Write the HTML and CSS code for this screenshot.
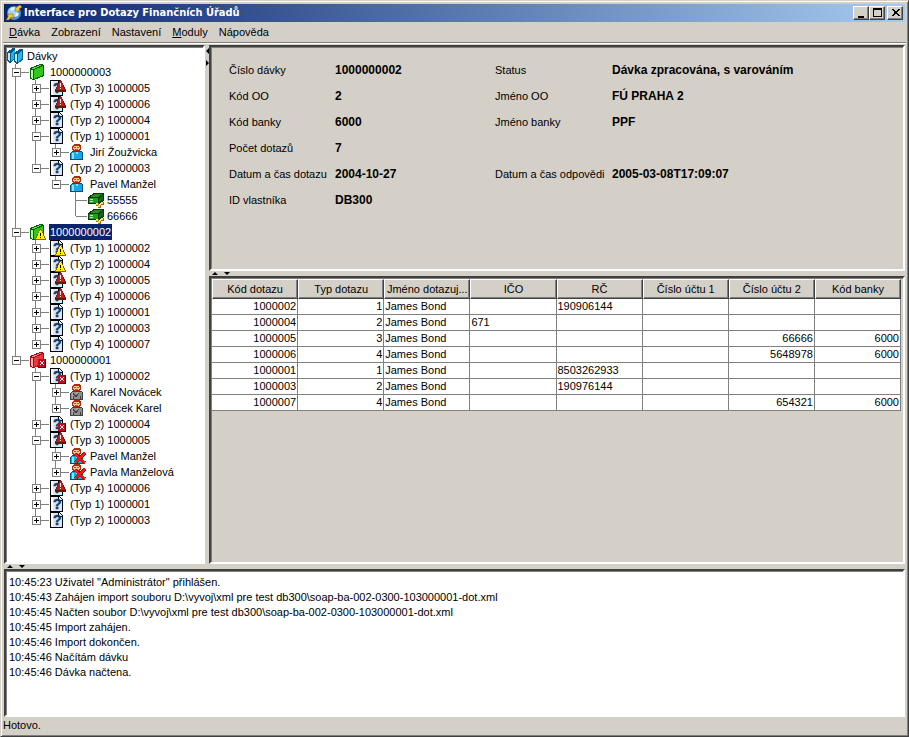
FILE: index.html
```
<!DOCTYPE html>
<html lang="cs">
  <head>
    <meta charset="UTF-8" />
    <meta name="viewport" content="width=device-width, initial-scale=1.0" />
    <title>Interface pro Dotazy Finančních Úřadů</title>
    <link rel="stylesheet" href="styles.css">
  </head>
  <body>
    <!-- icons -->
    <svg class="defs" width="0" height="0">
      <symbol id="book-shape" viewBox="0 0 16 16">
        <path class="ink" d="M0 4L10 0H12L14 1V12L4 16L0 15Z" />
        <path class="cover" d="M4 6L13 2V11L4 15Z" />
        <path class="spine" d="M1 6H3V15L1 14Z" />
        <path class="edge" d="M1 5L10 1H12L4 5Z" />
      </symbol>
      <symbol id="books" viewBox="0 0 18 16">
        <path fill="#085888" d="M0 4L6 0H8V11L3 15L0 13Z" />
        <path fill="#b8ecff" d="M1 5H3V13L1 12Z" />
        <path fill="#1fb4ee" d="M4 5L8 2V10L4 13Z" />
        <path fill="#085888" d="M7 5L13 1H16V12L10 16L7 14Z" />
        <path fill="#b8ecff" d="M8 6H10V14L8 13Z" />
        <path fill="#22b8f2" d="M11 6L15 3V11L11 14Z" />
      </symbol>
      <symbol id="doc" viewBox="0 0 16 16">
        <path fill="#000" d="M0 0H9L13 4V16H0Z" />
        <path fill="#dce6f4" d="M1 1H8V5H12V15H1Z" />
        <path fill="#fff" d="M9 1L12 4H9ZM1 1H3V15H1Z" />
      </symbol>
      <symbol id="error" viewBox="0 0 16 16">
        <path fill="#7c0c08" d="M10 0H11L16 10V12H5V10Z" />
        <path fill="#c81810" d="M10 1H11L15 10H6Z" />
        <path fill="#fff" d="M10 3H11V7H10ZM10 8H11V9H10Z" />
      </symbol>
      <symbol id="warning" viewBox="0 0 16 16">
        <path fill="#a05a00" d="M10 5H11L16 15V16H5V15Z" />
        <path fill="#ffee20" d="M10 6H11L15 15H6Z" />
        <path fill="#000" d="M10 9H11V12H10ZM10 13H11V14H10Z" />
      </symbol>
      <symbol id="cancel" viewBox="0 0 16 16">
        <path fill="#5c0008" d="M8 7H16V16H8Z" />
        <path fill="#b81020" d="M8 7H15V15H8Z" />
        <path stroke="#fff" d="M10 9L14 13M14 9L10 13" />
      </symbol>
      <symbol id="person" viewBox="0 0 16 16">
        <path class="outline" d="M2 7H11L13 9V16H0V9Z" />
        <path class="shirt" d="M2 8H11L12 9V15H1V9Z" />
        <path class="light" d="M2 9H4V15H2ZM6 8H8V10H6Z" />
        <path fill="#a83010" d="M4 0H9L11 2V6L9 7H4L2 6V2Z" />
        <path fill="#f8c890" d="M4 2H9V3H10V5H9V6H4V5H3V3H4Z" />
        <path fill="#c85020" d="M4 3H6V4H4ZM7 3H9V4H7ZM5 5H8V6H5Z" />
      </symbol>
      <symbol id="suit" viewBox="0 0 16 16">
        <path fill="none" stroke="#404040" d="M3 9L6 13L9 9M3 12V15M10 12V15" />
      </symbol>
      <symbol id="cross" viewBox="0 0 16 16">
        <path stroke="#a80808" stroke-width="3" d="M5 6L15 15M15 5L5 15" />
        <path stroke="#f01818" stroke-width="2" d="M5 6L15 15M15 5L5 15" />
      </symbol>
      <symbol id="money" viewBox="0 0 18 16">
        <path fill="#063c08" d="M0 5L6 1H16V9L11 12H0Z" />
        <path fill="#2c8c20" d="M2 5L7 2H15L10 5Z" />
        <path fill="#18a020" d="M1 6H10V11H1Z" />
        <path fill="#b8f0a0" d="M2 7H5V8H2ZM2 9H5V10H2Z" />
        <path fill="#0c6c10" d="M11 6L15 3V8L11 10Z" />
        <path fill="#a86000" d="M8 11H11V14H8ZM13 10H16V13H13ZM10 13H13V16H10Z" />
        <path fill="#ffe050" d="M8 11H10V13H8ZM13 10H15V12H13ZM10 13H12V15H10Z" />
      </symbol>
    </svg>

    <div class="window">
      <header class="titlebar">
        <svg class="logo" viewBox="0 0 16 16">
          <circle cx="8" cy="8" r="7" fill="#4a94d4" />
          <circle cx="7" cy="7" r="5" fill="#a8d4f4" />
          <path fill="#e8f4fc" d="M5 3L9 2L8 5L5 6ZM10 8L13 8L12 11L9 12Z" />
          <path fill="#f8c830" stroke="#8a5c00" stroke-width="0.5" d="M9 4L12 1L14 0L16 2L13 4L14 6H9Z" />
          <path fill="#f8c830" stroke="#8a5c00" stroke-width="0.5" d="M2 9L7 9V14L5 12L3 15L0 15L2 12Z" />
        </svg>
        <h1>Interface pro Dotazy Finančních Úřadů</h1>
        <button class="win-btn" aria-label="Minimalizovat"><svg viewBox="0 0 12 10"><path d="M3 8H9V10H3Z" /></svg></button>
        <button class="win-btn" aria-label="Maximalizovat"><svg viewBox="0 0 12 10"><path fill-rule="evenodd" d="M2 0H11V9H2ZM3 2V8H10V2Z" /></svg></button>
        <button class="win-btn close" aria-label="Zavřít"><svg viewBox="0 0 12 10"><path d="M2 1H4L6 3H7L9 1H11L8 4V5L11 8H9L7 6H6L4 8H2L5 5V4Z" /></svg></button>
      </header>

      <nav class="menu">
        <button><u>D</u>ávka</button>
        <button>Zobrazení</button>
        <button>Nastavení</button>
        <button><u>M</u>oduly</button>
        <button>Nápověda</button>
      </nav>

      <main class="workspace">
        <div class="columns">
          <section class="pane tree">
            <div class="row root">
              <svg class="icon wide"><use href="#books" /></svg>
              <span class="label">Dávky</span>
            </div>
            <ul id="tree"></ul>
          </section>

          <div class="divider vertical">
            <svg viewBox="0 0 5 20"><path d="M4 1V7L1 4ZM1 13V19L4 16Z" /></svg>
          </div>

          <div class="right">
            <section class="pane details">
              <dl>
                <dt>Číslo dávky</dt><dd>1000000002</dd>
                <dt>Kód OO</dt><dd>2</dd>
                <dt>Kód banky</dt><dd>6000</dd>
                <dt>Počet dotazů</dt><dd>7</dd>
                <dt>Datum a čas dotazu</dt><dd>2004-10-27</dd>
                <dt>ID vlastníka</dt><dd>DB300</dd>
              </dl>
              <dl>
                <dt>Status</dt><dd>Dávka zpracována, s varováním</dd>
                <dt>Jméno OO</dt><dd>FÚ PRAHA 2</dd>
                <dt>Jméno banky</dt><dd>PPF</dd>
                <dt></dt><dd></dd>
                <dt>Datum a čas odpovědi</dt><dd>2005-03-08T17:09:07</dd>
              </dl>
            </section>

            <div class="divider">
              <svg viewBox="0 0 20 5"><path d="M1 4H7L4 1ZM13 1H19L16 4Z" /></svg>
            </div>

            <section class="pane queries">
              <table>
                <thead>
                  <tr>
                    <th>Kód dotazu</th>
                    <th>Typ dotazu</th>
                    <th>Jméno dotazuj...</th>
                    <th>IČO</th>
                    <th>RČ</th>
                    <th>Číslo účtu 1</th>
                    <th>Číslo účtu 2</th>
                    <th>Kód banky</th>
                  </tr>
                </thead>
                <tbody id="queries"></tbody>
              </table>
            </section>
          </div>
        </div>

        <div class="divider">
          <svg viewBox="0 0 20 5"><path d="M1 4H7L4 1ZM13 1H19L16 4Z" /></svg>
        </div>

        <section class="pane log">
          <p>10:45:23 Uživatel "Administrátor" přihlášen.</p>
          <p>10:45:43 Zahájen import souboru D:\vyvoj\xml pre test db300\soap-ba-002-0300-103000001-dot.xml</p>
          <p>10:45:45 Načten soubor D:\vyvoj\xml pre test db300\soap-ba-002-0300-103000001-dot.xml</p>
          <p>10:45:45 Import zahájen.</p>
          <p>10:45:46 Import dokončen.</p>
          <p>10:45:46 Načítám dávku</p>
          <p>10:45:46 Dávka načtena.</p>
        </section>
      </main>

      <footer class="status">Hotovo.</footer>
    </div>
    <script src="script.js"></script>
  </body>
</html>
```

FILE: styles.css
```
* {
  margin: 0;
  padding: 0;
  box-sizing: border-box;
}

body {
  background: #d4d0c8;
  color: #000;
  font: 11px/16px "Liberation Sans", Arial, sans-serif;
}

button {
  border: 0;
  background: none;
  font: inherit;
  color: inherit;
}

ul {
  list-style: none;
}

.defs {
  display: block;
  height: 0;
}

.window {
  min-height: 100vh;
  display: flex;
  flex-direction: column;
  padding: 2px;
  border: 1px solid;
  border-color: #d4d0c8 #404040 #404040 #d4d0c8;
  box-shadow: inset 1px 1px #fff, inset -1px -1px #808080;
}

/* title bar */
.titlebar {
  display: flex;
  align-items: center;
  height: 18px;
  margin: 1px;
  padding: 0 2px;
  background: linear-gradient(to right, #0a246a, #a6caf0);
  color: #fff;
}

.titlebar h1 {
  flex: 1;
  margin-left: 2px;
  font: bold 11px/18px "DejaVu Sans Condensed", Tahoma, sans-serif;
}

.logo {
  width: 16px;
  height: 16px;
}

.win-btn {
  width: 16px;
  height: 14px;
  border: 1px solid;
  border-color: #fff #404040 #404040 #fff;
  background: #d4d0c8;
  box-shadow: inset -1px -1px #808080;
}

.win-btn.close {
  margin-left: 2px;
}

.win-btn svg {
  display: block;
  width: 12px;
  height: 10px;
  margin: 1px;
  shape-rendering: crispEdges;
}

/* menu */
.menu {
  display: flex;
  gap: 1px;
  height: 19px;
  padding-left: 1px;
}

.menu button {
  padding: 0 5px;
  line-height: 19px;
}

/* split panes */
.workspace {
  flex: 1;
  display: flex;
  flex-direction: column;
  padding: 0 1px;
  border-top: 1px solid #808080;
  box-shadow: inset 0 1px #fff;
}

.pane {
  border: 2px solid;
  border-color: #404040 #fff #fff #404040;
  box-shadow: inset 1px 1px #808080;
}

.columns {
  flex: 1;
  display: grid;
  grid-template-columns: 201px 4px minmax(0, 1fr);
  padding-top: 2px;
}

.right {
  display: flex;
  flex-direction: column;
}

.divider {
  height: 5px;
}

.divider svg {
  display: block;
  width: 20px;
  height: 5px;
  margin-left: 2px;
}

.divider.vertical {
  height: auto;
}

.divider.vertical svg {
  width: 5px;
  height: 20px;
  margin: 2px 0 0;
}

/* tree */
.tree {
  background: #fff;
  padding: 1px;
}

.row {
  display: flex;
  align-items: center;
  height: 16px;
}

.tree li {
  background: linear-gradient(#808080, #808080) 8px 0 / 1px 100% no-repeat;
}

.tree li:last-child {
  background-size: 1px 8px;
}

.tree li ul {
  margin-left: 20px;
}

.toggle {
  width: 9px;
  height: 9px;
  margin-left: 5px;
  border: 1px solid #808080;
  background: linear-gradient(#000, #000) 1px 3px / 5px 1px no-repeat, #fff;
}

.toggle.plus {
  background: linear-gradient(#000, #000) 1px 3px / 5px 1px no-repeat,
    linear-gradient(#000, #000) 3px 1px / 1px 5px no-repeat, #fff;
}

.dash {
  width: 8px;
  height: 1px;
  margin-right: 1px;
  background: #808080;
}

.leaf .dash {
  width: 11px;
  margin-left: 9px;
}

.icon {
  width: 16px;
  height: 16px;
  shape-rendering: crispEdges;
}

.icon.wide {
  width: 18px;
}

.label {
  margin-left: 3px;
  padding: 0 1px;
  line-height: 16px;
  white-space: nowrap;
}

.leaf .label {
  margin-left: 0;
}

.root .label {
  margin-left: 1px;
}

.selected {
  background: #0a246a;
  color: #fff;
}

.mark {
  fill: #0a4078;
  stroke: #0a4078;
  stroke-width: 0.5px;
  font: bold 14px "Liberation Sans", Arial, sans-serif;
}

.green {
  --cover: #30c818;
  --spine: #b0f8a0;
  --edge: #68d850;
  --ink: #085c08;
}

.red {
  --cover: #f03840;
  --spine: #ffb0b0;
  --edge: #ff8c90;
  --ink: #a00c18;
}

.blue {
  --shirt: #18a8e8;
  --light: #90e0ff;
  --outline: #004c80;
}

.gray {
  --shirt: #909090;
  --light: #a8a8a8;
  --outline: #404040;
}

.cover {
  fill: var(--cover);
}

.spine {
  fill: var(--spine);
}

.edge {
  fill: var(--edge);
}

.ink {
  fill: var(--ink);
}

.shirt {
  fill: var(--shirt);
}

.light {
  fill: var(--light);
}

.outline {
  fill: var(--outline);
}

/* batch details */
.details {
  display: grid;
  grid-template-columns: 266px 1fr;
  padding: 10px 18px 0;
  min-height: 226px;
}

.details dl {
  display: grid;
  grid-template-columns: 106px 1fr;
  grid-auto-rows: 26px;
  align-content: start;
  line-height: 26px;
}

.details dl + dl {
  grid-template-columns: 117px 1fr;
}

.details dd {
  font-weight: bold;
  font-size: 12px;
}

/* queries */
.queries {
  flex: 1;
  padding: 1px 2px 0 1px;
}

table {
  width: 100%;
  table-layout: fixed;
  border-collapse: separate;
  border-spacing: 0;
}

th {
  height: 20px;
  border: 1px solid;
  border-color: #fff #404040 #404040 #fff;
  box-shadow: inset -1px -1px #808080;
  font-weight: normal;
  line-height: 18px;
  white-space: nowrap;
}

td {
  height: 16px;
  padding: 0 1px;
  border-right: 1px solid #808080;
  border-bottom: 1px solid #808080;
  background: #fff;
  line-height: 15px;
}

.num {
  text-align: right;
}

/* log */
.log {
  min-height: 148px;
  padding: 4px 3px;
  background: #fff;
  line-height: 15px;
}

.status {
  height: 17px;
  line-height: 17px;
}
```

FILE: script.js
```
// [icon, label, children, selected]
var batches = [
  ['green', '1000000003', [
    ['doc error', '(Typ 3) 1000005'],
    ['doc error', '(Typ 4) 1000006'],
    ['doc', '(Typ 2) 1000004'],
    ['doc', '(Typ 1) 1000001', [['blue', 'Jirí Žoužvicka']]],
    ['doc', '(Typ 2) 1000003', [
      ['blue', 'Pavel Manžel', [['money', '55555'], ['money', '66666']]],
    ]],
  ]],
  ['green warning', '1000000002', [
    ['doc warning', '(Typ 1) 1000002'],
    ['doc warning', '(Typ 2) 1000004'],
    ['doc error', '(Typ 3) 1000005'],
    ['doc error', '(Typ 4) 1000006'],
    ['doc', '(Typ 1) 1000001'],
    ['doc', '(Typ 2) 1000003'],
    ['doc', '(Typ 4) 1000007'],
  ], true],
  ['red cancel', '1000000001', [
    ['doc cancel', '(Typ 1) 1000002', [
      ['gray suit', 'Karel Novácek'],
      ['gray suit', 'Novácek Karel'],
    ]],
    ['doc cancel', '(Typ 2) 1000004'],
    ['doc error', '(Typ 3) 1000005', [
      ['blue cross', 'Pavel Manžel'],
      ['blue cross', 'Pavla Manželová'],
    ]],
    ['doc error', '(Typ 4) 1000006'],
    ['doc', '(Typ 1) 1000001'],
    ['doc', '(Typ 2) 1000003'],
  ]],
];

var queries = [
  ['1000002', '1', 'James Bond', '', '190906144', '', '', ''],
  ['1000004', '2', 'James Bond', '671', '', '', '', ''],
  ['1000005', '3', 'James Bond', '', '', '', '66666', '6000'],
  ['1000006', '4', 'James Bond', '', '', '', '5648978', '6000'],
  ['1000001', '1', 'James Bond', '', '8503262933', '', '', ''],
  ['1000003', '2', 'James Bond', '', '190976144', '', '', ''],
  ['1000007', '4', 'James Bond', '', '', '', '654321', '6000'],
];

var shapes = { green: 'book-shape', red: 'book-shape', blue: 'person', gray: 'person' };

function icon(names) {
  var html = '';
  names.split(' ').forEach(function (name) {
    html += `<use href="#${shapes[name] || name}" />`;
    if (name == 'doc') {
      html += '<text class="mark" x="3" y="13">?</text>';
    }
  });
  var color = names.split(' ')[0];
  var wide = color == 'money' ? 'wide' : '';
  return `<svg class="icon ${color} ${wide}">${html}</svg>`;
}

function renderNodes(nodes) {
  var html = '';
  for (var i = 0; i < nodes.length; i++) {
    var node = nodes[i];
    var leaf = node[0] == 'money';
    var toggle = leaf
      ? ''
      : `<button class="toggle ${node[2] ? '' : 'plus'}" aria-label="${node[1]}"></button>`;
    html += `<li>
      <div class="row ${leaf ? 'leaf' : ''}">${toggle}<span class="dash"></span>${icon(node[0])}<span class="label ${node[3] ? 'selected' : ''}">${node[1]}</span></div>
      ${node[2] ? '<ul>' + renderNodes(node[2]) + '</ul>' : ''}
    </li>`;
  }
  return html;
}

function renderQueries() {
  var html = '';
  for (var i = 0; i < queries.length; i++) {
    html += '<tr>';
    for (var j = 0; j < queries[i].length; j++) {
      var num = j < 2 || j > 4;
      html += `<td class="${num ? 'num' : ''}">${queries[i][j]}</td>`;
    }
    html += '</tr>';
  }
  return html;
}

document.getElementById('tree').innerHTML = renderNodes(batches);
document.getElementById('queries').innerHTML = renderQueries();
```
